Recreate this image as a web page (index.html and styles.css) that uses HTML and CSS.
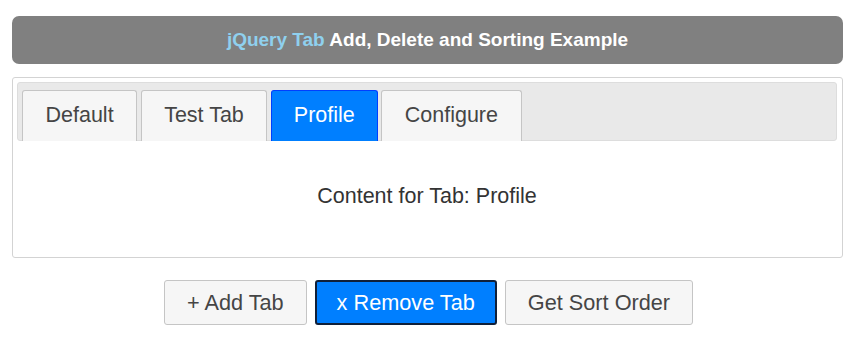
FILE: index.html
```html
<!DOCTYPE html>
<html lang="en">
<head>
    <meta charset="UTF-8">
    <title>jQuery Tab Add, Delete and Sorting Example</title>
    <link rel="stylesheet" href="styles.css">
</head>
<body>
    <div class="header">
        <span class="brand">jQuery Tab</span> Add, Delete and Sorting Example
    </div>

    <div class="tabs" id="tabs">
        <ul class="tabs-nav">
            <li class="tab">Default</li>
            <li class="tab">Test Tab</li>
            <li class="tab active">Profile</li>
            <li class="tab">Configure</li>
        </ul>
        <div class="tab-panel">Content for Tab: Profile</div>
    </div>

    <div class="actions">
        <button class="btn">+ Add Tab</button>
        <button class="btn btn-active">x Remove Tab</button>
        <button class="btn">Get Sort Order</button>
    </div>
</body>
</html>
```

FILE: styles.css
```css
body {
    font-family: 'Liberation Sans', Arial, sans-serif;
    margin: 16px 7px 0 12px;
    background: #fff;
    color: #333;
}

.header {
    background: #808080;
    color: #fff;
    font-weight: bold;
    font-size: 19px;
    height: 48px;
    line-height: 48px;
    text-align: center;
    border-radius: 7px;
    margin-bottom: 13px;
}

.brand {
    color: #8fd0ee;
}

.tabs {
    border: 1px solid #d3d3d3;
    border-radius: 3px;
    padding: 4px 5px 0 4px;
    box-sizing: border-box;
    height: 181px;
}

.tabs-nav {
    list-style: none;
    margin: 0;
    padding: 7px 0 0 4px;
    display: flex;
    gap: 3.5px;
    background: #e9e9e9;
    border: 1px solid #dddddd;
    border-radius: 3px;
    height: 50px;
}

.tab {
    font-size: 21.5px;
    color: #454545;
    background: #f6f6f6;
    border: 1px solid #c5c5c5;
    border-bottom: none;
    border-radius: 3px 3px 0 0;
    padding: 12px 22.5px 0;
    line-height: 24px;
    height: 51px;
    box-sizing: border-box;
    margin-bottom: -1px;
}

.tab.active {
    background: #007fff;
    border-color: #003eff;
    color: #fff;
    padding: 12px 22px 0;
}

.tab-panel {
    font-size: 21.5px;
    line-height: 24px;
    text-align: center;
    padding: 43px 0 0;
}

.actions {
    display: flex;
    justify-content: center;
    gap: 8px;
    margin-top: 22px;
    padding-left: 2px;
}

.btn {
    font-family: 'Liberation Sans', Arial, sans-serif;
    font-size: 21.7px;
    color: #454545;
    background: #f6f6f6;
    border: 1px solid #c5c5c5;
    border-radius: 3px;
    height: 45px;
    padding: 0 22px;
}

.btn-active {
    background: #007fff;
    border: 2px solid #10203a;
    color: #fff;
    padding: 0 20px;
}
```
